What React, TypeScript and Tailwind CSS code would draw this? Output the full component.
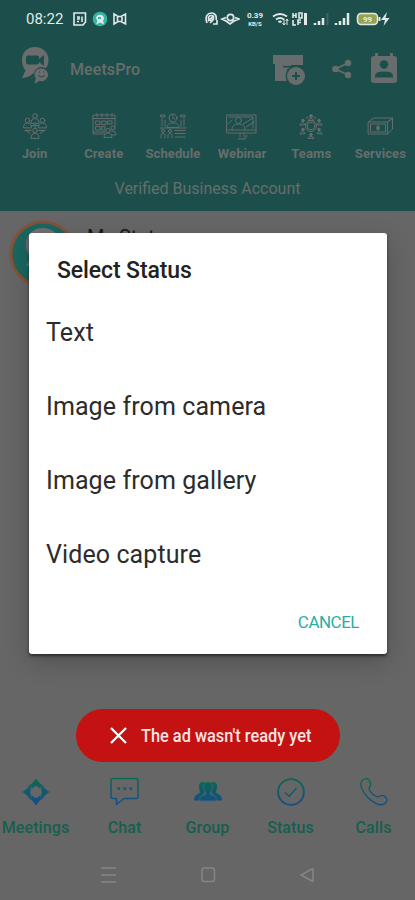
import type { ReactNode } from 'react';

interface TabItem {
  label: string;
  icon: ReactNode;
}

const LineIcon = ({ children, width = 28 }: { children: ReactNode; width?: number }) => (
  <svg width={width} height="28" viewBox={`0 0 ${width} 28`} fill="none" stroke="currentColor" strokeWidth="1" strokeLinejoin="round" strokeLinecap="round">
    {children}
  </svg>
);

const JoinIcon = () => (
  <LineIcon>
    <circle cx="14" cy="4" r="2.3" />
    <path d="M10 11c0-3 1.5-4.500 4-4.500s4 1.500 4 4.500z" />
    <circle cx="6.5" cy="8.5" r="2.3" />
    <path d="M2.500 15.500c0-3 1.500-4.500 4-4.500s4 1.500 4 4.500z" />
    <circle cx="21.5" cy="8.5" r="2.3" />
    <path d="M17.500 15.500c0-3 1.500-4.500 4-4.500s4 1.500 4 4.500zM10.500 13.500h7M14 11v5" />
    <path d="M4 18.500h6M18 18.500h6M5 18.500l4 3M23 18.500l-4 3" />
    <circle cx="14" cy="18.5" r="2.3" />
    <path d="M10 26c0-3 1.500-4.500 4-4.500s4 1.500 4 4.500z" />
  </LineIcon>
);

const CreateIcon = () => (
  <LineIcon>
    <path d="M15 22H3V3h22v11M3 6.500h22M7 1.500v3.500M12 1.500v3.500M17 1.500v3.500M22 1.500v3.500M3 20h12" />
    <path d="M6 9h4v3.500H6zM12 9h4v3.500h-4zM6 14.500h4V18H6zM12 14.500h3V18h-3zM18 9h4v3h-4z" />
    <circle cx="23" cy="16" r="2" />
    <circle cx="18" cy="18.5" r="2.2" />
    <path d="M14 25c0-3 2-4 4-4s4 1 4 4zM22 19c3 0 4 1 4 4h-4" />
  </LineIcon>
);

const ScheduleIcon = () => (
  <LineIcon>
    <circle cx="14" cy="6" r="4" />
    <path d="M14 3.500V6l2 1M8 15c0-3 3-4 6-4s6 1 6 4zM2 3h4v2H2zM22 3h4v2h-4zM3 7v7M25 7v7M6 8v6M22 8v6M1 16h26" />
    <circle cx="4" cy="19" r="1.5" />
    <circle cx="11" cy="19" r="1.5" />
    <path d="M2 26v-3c0-2 4-2 4 0v3M9 26v-3c0-2 4-2 4 0v3M16 18.500h10M16 21.500h10M16 25h10" />
  </LineIcon>
);

const WebinarIcon = () => (
  <LineIcon width={32}>
    <path d="M1 3h29v18H1zM1 18h29M3 5h24v11" />
    <circle cx="12.5" cy="8.5" r="3" />
    <path d="M6 18c0-4 2-6 6.500-6s6.500 2 6.500 6M17 12l10-6M20 15l8-5M12 27h7l2-4M14 21v4M18 21v4M2 12l4-4" />
  </LineIcon>
);

const TeamsIcon = () => (
  <LineIcon>
    <circle cx="14" cy="14" r="5.5" />
    <circle cx="14" cy="14" r="3.8" />
    <g fill="currentColor">
      <circle cx="14" cy="4" r="1.3" />
      <circle cx="14" cy="22.5" r="1.3" />
      <circle cx="6" cy="8.5" r="1.3" />
      <circle cx="22" cy="8.5" r="1.3" />
      <circle cx="6" cy="17.5" r="1.3" />
      <circle cx="22" cy="17.5" r="1.3" />
    </g>
    <path d="M11 8c0-2 6-2 6 0zM11 26c0-2 6-2 6 0zM3 13c0-3 4-3 5-1zM25 13c0-3-4-3-5-1zM3 22c0-3 4-3 5-1zM25 22c0-3-4-3-5-1zM9 6l2-1M19 6l-2-1" />
  </LineIcon>
);

const ServicesIcon = () => (
  <LineIcon>
    <path d="M2.500 10h19v12h-19zM2.500 10l5-4h19l-5 4M26.500 6v11l-5 5M4.500 12.500v7M19.500 12.500v7M4.500 12h15M4.500 20h15M23 9l2-1.500" />
    <path d="M12 13.500v5M11 15h2v2h-2z" strokeWidth="1.4" />
  </LineIcon>
);

const Gradient = ({ id }: { id: string }) => (
  <defs>
    <linearGradient id={id} x1="0" y1="0" x2="0" y2="28" gradientUnits="userSpaceOnUse">
      <stop offset="0.1" stopColor="#0b6752" />
      <stop offset="0.9" stopColor="#134f85" />
    </linearGradient>
  </defs>
);

const MeetingsIcon = () => (
  <svg width="30" height="30" viewBox="0 0 30 30">
    <Gradient id="g-meet" />
    {/* four arrow heads around an open, notched square */}
    <g fill="none" stroke="url(#g-meet)" strokeWidth="1.7">
      <path d="M10.500 7.500L7 11M19.500 7.500L23 11M10.500 22.500L7 19M19.500 22.500L23 19" />
      <path d="M9.500 10.500h2v-2M20.500 10.500h-2v-2M9.500 19.500h2v2M20.500 19.500h-2v2" />
    </g>
    <g fill="url(#g-meet)">
      <path d="M15 1.500l5.500 7-2 1.500-3.500-1-3.500 1-2-1.500z" />
      <path d="M15 28.500l-5.500-7 2-1.500 3.500 1 3.500-1 2 1.500z" />
      <path d="M1.500 15l7-5 1.500 2-1 3 1 3-1.500 2z" />
      <path d="M28.500 15l-7-5-1.500 2 1 3-1 3 1.500 2z" />
    </g>
  </svg>
);

const ChatIcon = () => (
  <svg width="30" height="30" viewBox="0 0 30 30" fill="none" stroke="url(#g-chat)" strokeWidth="1.5" strokeLinejoin="round">
    <Gradient id="g-chat" />
    <path d="M2.500 1.500h24q1.500 0 1.500 1.500v17q0 1.500-1.500 1.500H14L6.500 27.500v-6h-4Q1 21.500 1 20V3q0-1.500 1.500-1.500z" />
    <path d="M7.500 11.500h2.600M13.500 11.500h2.600M19.500 11.500h2.600" strokeWidth="2.6" stroke="#12596a" />
  </svg>
);

const GroupIcon = () => (
  <svg width="30" height="30" viewBox="0 0 30 30" fill="url(#g-group)">
    <Gradient id="g-group" />
    <path d="M6 8.500q0-3.500 4-3.500h2v10L11 17q-3 1.500-4 6.500H1q0-4.500 3-6l3-2Q6 12.500 6 8.500z" />
    <path d="M24 8.500q0-3.500-4-3.500h-2v10l1 2q3 1.500 4 6.500h6q0-4.500-3-6l-3-2q1-3 1-7z" />
    <path d="M15 5c4 0 4.800 2.500 4.400 6-.3 2.200-1.200 3.500-2 4.500V17l4 2q2.100 1 2.100 5h-17q0-4 2.100-5l4-2v-1.500c-.8-1-1.700-2.300-2-4.500C10.200 7.500 11 5 15 5z" stroke="#666" strokeWidth="0.7" />
  </svg>
);

const StatusIcon = () => (
  <svg width="30" height="30" viewBox="0 0 30 30" fill="none" stroke="url(#g-status)" strokeWidth="1.9">
    <Gradient id="g-status" />
    <circle cx="15" cy="15" r="12.9" />
    <path d="M9 15.500l4.200 3.800 7.300-8.300" strokeWidth="1.5" />
  </svg>
);

const CallsIcon = () => (
  <svg width="30" height="30" viewBox="0 0 30 30" fill="none" stroke="url(#g-calls)" strokeWidth="1.4" strokeLinejoin="round">
    <Gradient id="g-calls" />
    <path d="M3.200 3.500C5 1.300 8 .8 9.800 2.800c1.800 2.400 2.300 4.800 1.200 6.500-1.300 1.700-1.500 2.700.2 5 1.600 2.200 3.500 4 5.800 5.200 1.500.8 2.500.3 4-.5 1.800-1 4.500-.2 6 1.700 1.500 2 1 4-.8 5.600-2.500 2.200-6 1.700-9.500 0C10.500 23 5.800 18 3 12 1.500 8.500 1.200 5.800 3.200 3.500z" />
  </svg>
);

const topTabs: TabItem[] = [
  { label: 'Join', icon: <JoinIcon /> },
  { label: 'Create', icon: <CreateIcon /> },
  { label: 'Schedule', icon: <ScheduleIcon /> },
  { label: 'Webinar', icon: <WebinarIcon /> },
  { label: 'Teams', icon: <TeamsIcon /> },
  { label: 'Services', icon: <ServicesIcon /> },
];

const bottomTabs: TabItem[] = [
  { label: 'Meetings', icon: <MeetingsIcon /> },
  { label: 'Chat', icon: <ChatIcon /> },
  { label: 'Group', icon: <GroupIcon /> },
  { label: 'Status', icon: <StatusIcon /> },
  { label: 'Calls', icon: <CallsIcon /> },
];

const statusOptions = ['Text', 'Image from camera', 'Image from gallery', 'Video capture'];

const Logo = () => (
  <svg width="28" height="40" viewBox="0 0 28 40">
    <path d="M14 1C6 1 1 6.500 1 14c0 5 1.500 8 3.500 10.500L1 32c5-.5 8.500-2 11-4.500L25 22c2-3 2.500-5 2.500-8C27.500 6.500 22 1 14 1z" fill="#6a6d6c" />
    <path d="M7 9.500h9q2 0 2 2v5q0 2-2 2H7q-2 0-2-2v-5q0-2 2-2zM18 13l5-4v11l-5-4z" fill="#1c4f4b" />
    <circle cx="20.5" cy="28.5" r="7.5" fill="#1c4f4b" />
    <path d="M20.500 22.500a6.300 6.300 0 1 1-2 12.200L13.500 38l1.300-5.500a6.300 6.300 0 0 1 5.700-10z" fill="#6a6d6c" />
    <path d="M17 29.500q3.500 3 7 0M18 26h1M22 26h1" stroke="#1c4f4b" strokeWidth="1" fill="none" />
  </svg>
);

const StatusBar = () => (
  <div className="flex h-[38px] items-center pl-[26px] text-[#e3e9e8]">
    <span className="w-[38px] whitespace-nowrap text-[15px]">08:22</span>
    <svg className="ml-[9px]" width="54" height="16" viewBox="0 0 54 16" fill="none" stroke="currentColor" strokeWidth="1.6">
      <path d="M1 2h11.500v9l-2.500 3H1zM4 6h2v2H4M4 10.500h2M9 5.500v5.500" />
      <circle cx="27" cy="8" r="7.3" fill="#34b6a0" stroke="none" />
      <path d="M23 7a4 3.500 0 1 1 7 2.500l1 4-4-2-4 2 1.500-3.500z" fill="currentColor" stroke="none" />
      <path d="M25 6h3v2h-3z" fill="#34b6a0" stroke="none" />
      <path d="M41 3l4 2.500h3L52.500 3v10L48 10.500h-3L41 13zM44.500 6v4M49 6v4" />
    </svg>
    <svg className="ml-[78px]" width="35" height="16" viewBox="0 0 35 16" fill="none" stroke="currentColor" strokeWidth="1.7">
      <path d="M2 12C-.5 5 3 2 6.500 2S12 5 11 9M3 10l6-5M5 12l3-3M8 13h4V9" />
      <circle cx="6" cy="7" r="2.5" />
      <path d="M21 6.500L17 8l4 2 4 3 4-3 5-2-4-1.500" />
      <circle cx="25.5" cy="6.5" r="3.2" />
    </svg>
    <div className="ml-[5px] flex w-[20px] flex-col items-center font-bold">
      <span className="text-[8px] leading-[10px]">0.39</span>
      <span className="-mt-px text-[6px] leading-[8px]">KB/S</span>
    </div>
    <svg className="ml-[7px]" width="130" height="16" viewBox="0 0 130 16" fill="none" stroke="currentColor" strokeWidth="1.9">
      <path d="M1 5.500q7-5 14 0M4 8.500q4-3 8 0M6.500 11.200q1.500-1.200 3 0" />
      <path d="M12 8v6M10.500 12l1.500 2 1.500-2M15 14V8M13.700 10L15 8l1.300 2" strokeWidth="1" />
      <path d="M21 2v5M24 2v5M21 4.500h3M27 2h3v5h-3zM21 9v5h3M26 14V9h3M26 11.500h3" strokeWidth="1.6" />
      <path d="M33.500 2v12" strokeWidth="3" />
      <path d="M43 14v-2M47 14v-4M51 14V7" strokeWidth="2.5" />
      <path d="M55.500 14V2" strokeWidth="2" stroke="#3d6965" />
      <path d="M64 14v-2M68 14v-4M72 14V7M76 14V2" strokeWidth="2.5" />
      <rect x="85.500" y="2.5" width="20" height="11" rx="3.5" fill="#98a352" strokeWidth="1.5" />
      <path d="M107.500 6v4" strokeWidth="2" />
      <path d="M115 1l-6 8h4l-1.500 6 6-8h-4z" fill="currentColor" stroke="none" />
      <text x="95.500" y="11" textAnchor="middle" fontSize="8" fontWeight="700" fill="currentColor" stroke="none">99</text>
    </svg>
  </div>
);

const Header = () => (
  <header className="h-[211px] bg-[#1c4f4b] text-[#676d6c]">
    <StatusBar />
    <div className="flex h-[62px] items-center pl-[21px]">
      <div className="-mt-[6px]"><Logo /></div>
      <span className="ml-[21px] w-[203px] pt-px text-base font-medium tracking-[0.1px]">MeetsPro</span>
      <svg width="34" height="34" viewBox="0 0 34 34" fill="currentColor">
        <path d="M0 3h30v10H18v4h-4v12H2V12H0z" />
        <path d="M10 14h14v1.500H10z" fill="#1c4f4b" />
        <circle cx="23" cy="24" r="10.5" fill="#1c4f4b" />
        <circle cx="23" cy="24" r="9" />
        <path d="M23 20v8M19 24h8" stroke="#1c4f4b" strokeWidth="2" />
      </svg>
      <svg className="ml-[25px]" width="20" height="20" viewBox="0 0 20 20" fill="currentColor">
        <circle cx="3.5" cy="10" r="3.3" />
        <circle cx="16" cy="4" r="3.2" />
        <circle cx="16" cy="16" r="3.2" />
        <path d="M16 4L3.500 10 16 16" fill="none" stroke="currentColor" strokeWidth="1.7" />
      </svg>
      <svg className="-mt-[2px] ml-[18px]" width="28" height="30" viewBox="0 0 28 30" fill="currentColor">
        <path d="M5 0h3v3h12V0h3v3h1q3 0 3 3v21q0 3-3 3H4q-3 0-3-3V6q0-3 3-3h1z" />
        <circle cx="14" cy="11.5" r="4.2" fill="#1c4f4b" />
        <path d="M5 24.500v-2q0-4 9-4t9 4v2z" fill="#1c4f4b" />
      </svg>
    </div>
    <nav className="grid h-[74px] grid-cols-6 pt-[12px]">
      {topTabs.map(tab => (
        <div key={tab.label} className="flex flex-col items-center">
          {tab.icon}
          <span className="mt-[5px] text-[13px] font-bold leading-[18px] tracking-[0.1px]">{tab.label}</span>
        </div>
      ))}
    </nav>
    <p className="pt-[3px] text-center text-base">Verified Business Account</p>
  </header>
);

const BottomNav = () => (
  <nav className="grid h-[72px] grid-cols-5 text-[#155f50]">
    {bottomTabs.map(tab => (
      <div key={tab.label} className="flex flex-col items-center first:-ml-[12px]">
        {tab.icon}
        <span className="mt-[11px] text-base font-medium leading-5 tracking-[0.1px]">{tab.label}</span>
      </div>
    ))}
  </nav>
);

const SystemNav = () => (
  <div className="flex h-[51px] items-center pl-[101px] text-[#858585]">
    <svg width="214" height="18" viewBox="0 0 214 18" fill="none" stroke="currentColor" strokeWidth="1.5">
      <path d="M0 2h15M0 9h15M0 16h15" />
      <rect x="101" y="2" width="12.5" height="13.5" rx="2.5" />
      <path d="M200 9l12-6.500v13z" strokeLinejoin="round" />
    </svg>
  </div>
);

const StatusDialog = () => (
  <div role="dialog" className="absolute left-[29px] top-[233px] flex h-[421px] w-[358px] flex-col rounded-[3px] bg-white shadow-[0_2px_3px_rgba(0,0,0,0.5),0_8px_24px_rgba(0,0,0,0.2)]">
    <h2 className="pl-7 pt-[23px] text-[23px] font-medium leading-[30px] tracking-[-0.1px] text-[#222]">Select Status</h2>
    <ul className="mt-[10px]">
      {statusOptions.map(option => (
        <li key={option} className="flex h-[73.8px] items-center pl-[17px] text-[25px] tracking-[0.1px] text-[#2c2c2c]">{option}</li>
      ))}
    </ul>
    <button className="mt-[19px] self-end pr-[28px] text-[17px] leading-6 tracking-[-0.5px] text-[#2aaea0]">CANCEL</button>
  </div>
);

const Toast = () => (
  <div className="absolute left-[76px] top-[709px] flex h-[53px] w-[264px] items-center rounded-full bg-[#c41111] pl-[34px] text-[#f8e4e4]">
    <svg width="17" height="17" viewBox="0 0 17 17" stroke="#fff" strokeWidth="2.3">
      <path d="M1 1l15 15M16 1L1 16" />
    </svg>
    <span className="ml-[14px] origin-left scale-x-[0.86] whitespace-nowrap pt-px text-[19px] font-medium">The ad wasn't ready yet</span>
  </div>
);

const App = () => (
  <div className="relative flex h-[900px] w-[415px] flex-col overflow-hidden bg-[#666] font-[Roboto,sans-serif]">
    <Header />
    <main className="flex flex-1 pl-[9px] pt-[9px]">
      <svg width="68" height="68" viewBox="0 0 68 68">
        <circle cx="34" cy="34" r="32" fill="#1b6660" stroke="#845239" strokeWidth="3" />
        <path d="M34 8c-9 0-17 6-17 16 0 7 2 10 5 13l-5 9c7 0 14-3 17-6 10 0 17-7 17-16S44 8 34 8z" fill="#707070" />
      </svg>
      <span className="ml-[10px] mt-[5px] text-xl leading-6 text-[#171717]">My Status</span>
    </main>
    <BottomNav />
    <SystemNav />
    <StatusDialog />
    <Toast />
  </div>
);

export default App;
